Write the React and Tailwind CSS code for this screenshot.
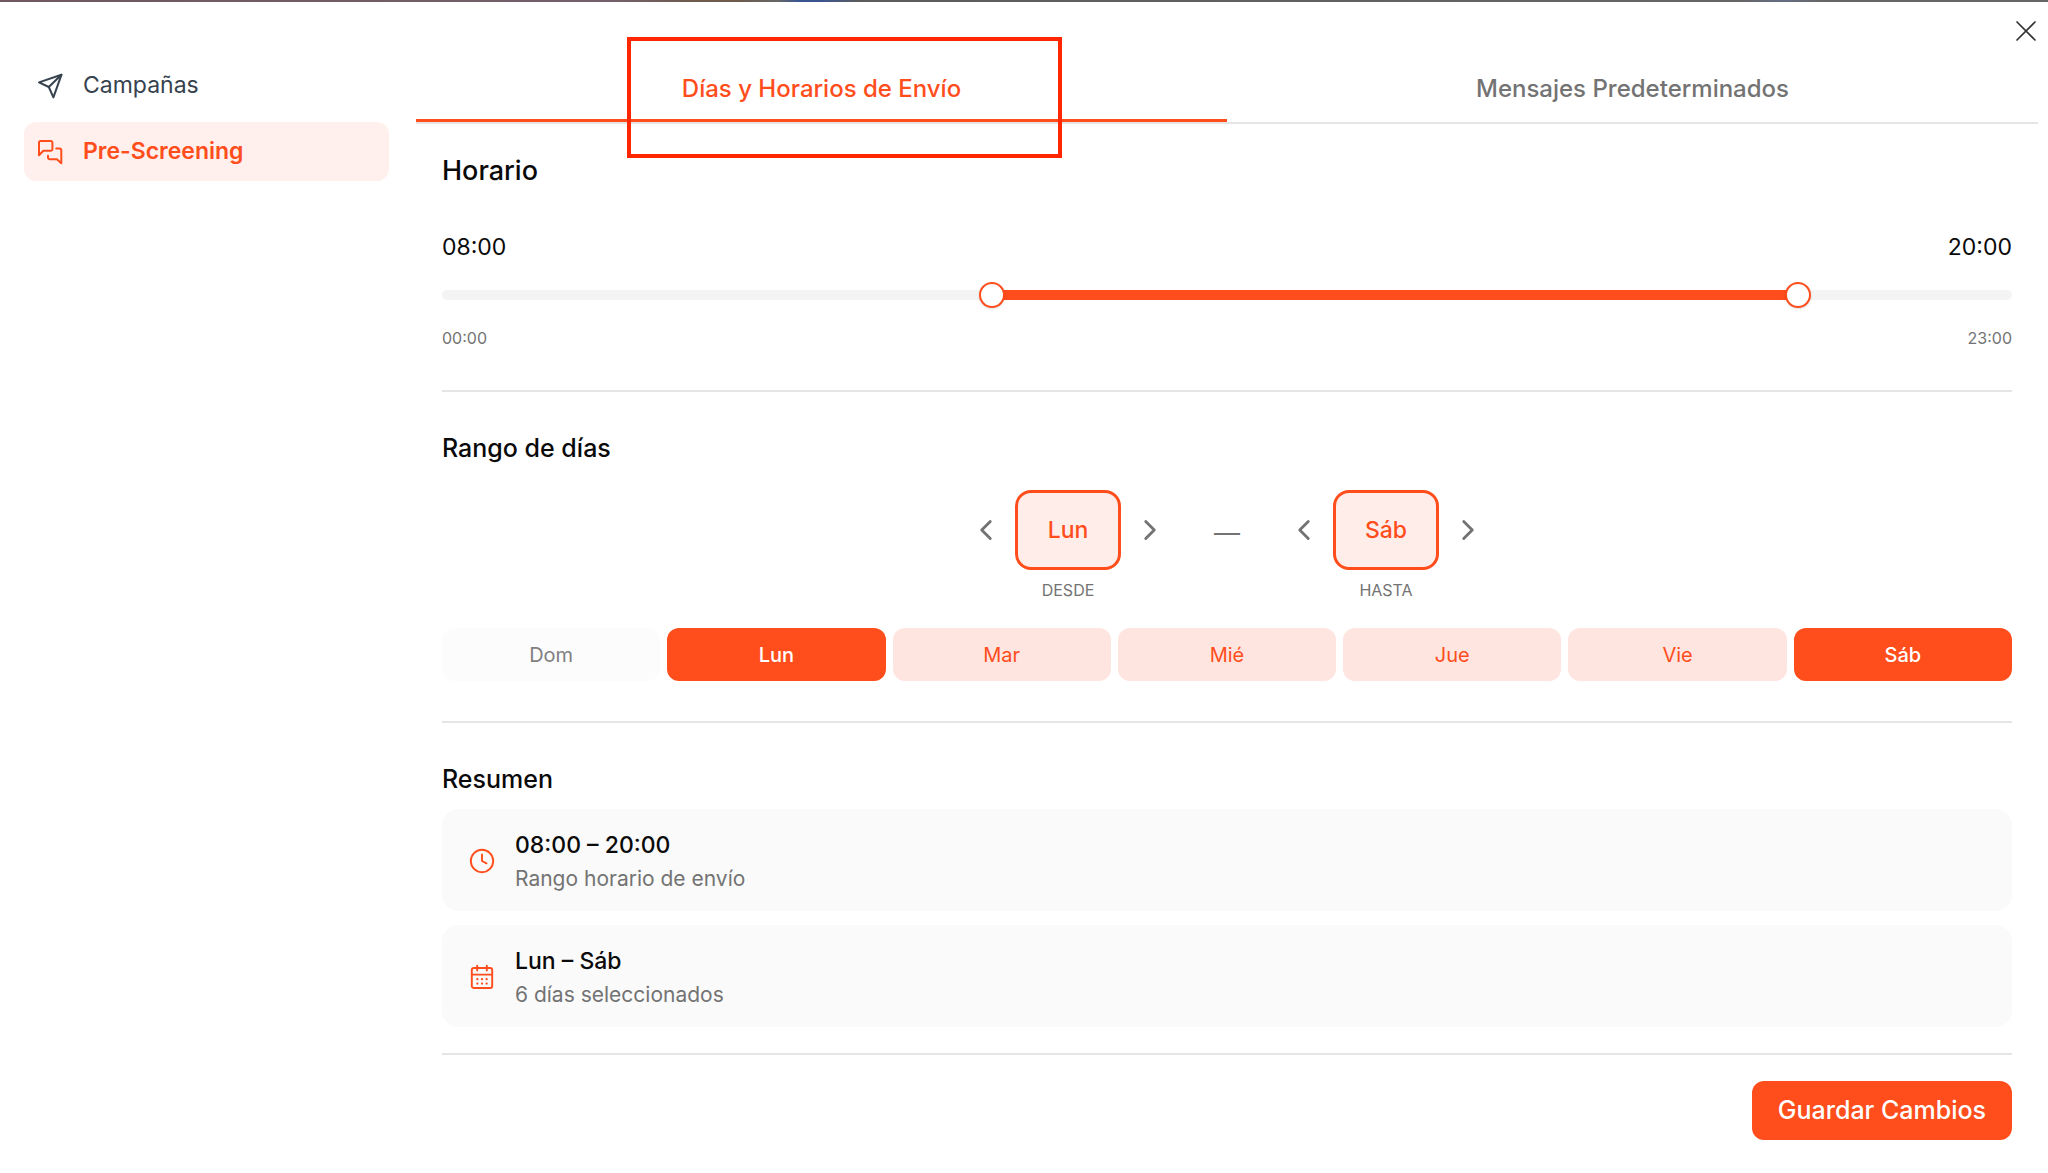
import React, { useState } from 'react';
import { ChevronLeft, ChevronRight } from 'lucide-react';

const DAYS = ['Dom', 'Lun', 'Mar', 'Mié', 'Jue', 'Vie', 'Sáb'];
const MAX_HOUR = 23;

const formatHour = (hour) => `${String(hour).padStart(2, '0')}:00`;

const SendIcon = () => (
  <svg className="size-[26px] shrink-0" viewBox="-1 -1 26 26" fill="none" stroke="currentColor" strokeWidth="2" strokeLinecap="round" strokeLinejoin="round">
    <path d="M23.4 0.8 L1 8.4 L10.8 13 L15.4 23.4 Z" />
    <path d="M23.4 0.8 L10.8 13" />
  </svg>
);

const ChatIcon = () => (
  <svg className="size-[26px] shrink-0" viewBox="-1 -1 26 26" fill="none" stroke="currentColor" strokeWidth="2" strokeLinecap="round" strokeLinejoin="round">
    <path d="M1 15.3 V2.6 A1.6 1.6 0 0 1 2.6 1 H12.8 A1.6 1.6 0 0 1 14.4 2.6 V9.2 A1.6 1.6 0 0 1 12.8 10.8 H5.4 Z" />
    <path d="M18.2 8.6 H21.7 A1.6 1.6 0 0 1 23.3 10.2 V23.3 L18.9 19.2 H11.8 A1.8 1.8 0 0 1 10 17.4 V15.8" />
  </svg>
);

const ClockIcon = () => (
  <svg className="size-[26px] shrink-0" viewBox="-1 -1 26 26" fill="none" stroke="currentColor" strokeWidth="1.9" strokeLinecap="round" strokeLinejoin="round">
    <circle cx="12" cy="12" r="11.2" />
    <path d="M12 5.5 V12 L16.5 14.3" />
  </svg>
);

const CalendarIcon = () => (
  <svg className="size-[26px] shrink-0" viewBox="-1 -1 26 26" fill="none" stroke="currentColor" strokeWidth="1.9" strokeLinecap="round" strokeLinejoin="round">
    <rect x="1.8" y="3" width="20.4" height="20" rx="2" />
    <path d="M1.8 9.6 H22.2 M7.2 0.8 V5.5 M16.8 0.8 V5.5" />
    <path d="M7.3 14.2 h.1 M12 14.2 h.1 M16.6 14.2 h.1 M7.3 18.6 h.1 M12 18.6 h.1 M16.6 18.6 h.1" strokeWidth="2.2" />
  </svg>
);

const CloseIcon = () => (
  <svg className="size-5" viewBox="0 0 20 20" fill="none" stroke="currentColor" strokeWidth="1.7" strokeLinecap="round">
    <path d="M1 1 L19 19 M19 1 L1 19" />
  </svg>
);

const rangeInput =
  'pointer-events-none absolute inset-0 h-full w-full appearance-none bg-transparent [&::-webkit-slider-thumb]:pointer-events-auto [&::-webkit-slider-thumb]:size-[26px] [&::-webkit-slider-thumb]:appearance-none [&::-webkit-slider-thumb]:rounded-full [&::-webkit-slider-thumb]:border-2 [&::-webkit-slider-thumb]:border-[#ff4d1c] [&::-webkit-slider-thumb]:bg-white [&::-webkit-slider-thumb]:shadow-sm';

const Sidebar = () => (
  <nav className="flex w-[365px] shrink-0 flex-col gap-[7px] pt-[54px] text-[23px]">
    <a href="#campanas" className="flex h-[59px] items-center gap-5 rounded-xl px-[13px] text-[#36424e]">
      <SendIcon />
      Campañas
    </a>
    <a href="#pre-screening" className="flex h-[59px] items-center gap-5 rounded-xl bg-[#fff0ed] px-[13px] font-semibold text-[#ff4d1c]">
      <ChatIcon />
      Pre-Screening
    </a>
  </nav>
);

const DayPicker = ({ label, day, onChange }) => (
  <div className="flex flex-col items-center gap-2">
    <div className="flex items-center gap-3">
      <button type="button" aria-label={`${label} anterior`} onClick={() => onChange((day + 6) % 7)} className="text-[#737373]">
        <ChevronLeft className="size-[34px]" />
      </button>
      <span className="flex h-20 w-[106px] items-center justify-center rounded-2xl border-3 border-[#ff4d1c] bg-[#ffede9] text-[23px] font-medium text-[#ff4d1c]">
        {DAYS[day]}
      </span>
      <button type="button" aria-label={`${label} siguiente`} onClick={() => onChange((day + 1) % 7)} className="text-[#737373]">
        <ChevronRight className="size-[34px]" />
      </button>
    </div>
    <span className="text-base text-[#737373] uppercase">{label}</span>
  </div>
);

const SummaryCard = ({ icon, title, text }) => (
  <div className="flex items-center gap-5 rounded-2xl bg-[#fafafa] px-[27px] pt-[18px] pb-4 text-[#ff4d1c]">
    {icon}
    <div>
      <p className="text-[23px] leading-9 font-medium text-[#0a0a0a]">{title}</p>
      <p className="text-[21px] leading-8 text-[#737373]">{text}</p>
    </div>
  </div>
);

const App = () => {
  const [start, setStart] = useState(8);
  const [end, setEnd] = useState(20);
  const [from, setFrom] = useState(1);
  const [to, setTo] = useState(6);

  const dayStyle = (index) => {
    if (index === from || index === to) return 'bg-[#ff4d1c] text-white font-medium';
    if (index > from && index < to) return 'bg-[#ffe5df] text-[#ff4d1c]';
    return 'bg-[#fcfcfc] text-[#808080]';
  };

  return (
    <div className="min-h-screen bg-white font-['Inter',sans-serif] text-[#0a0a0a]">
      {/* Sliver of the page behind the dialog */}
      <div className="h-0.5 bg-[linear-gradient(to_right,#6f5860_0%,#73606a_30%,#6e5b4c_34%,#6e5b4c_36%,#666666_38%,#3a5592_39%,#3a5592_40%,#5c5c5c_42%,#666666_85%,#666e85_87%,#666666_89%)]" />

      <div className="relative flex pr-2.5 pl-6">
        <button type="button" aria-label="Cerrar" className="absolute top-[19px] right-3 text-[#333333]">
          <CloseIcon />
        </button>

        <Sidebar />

        <main className="ml-[27px] min-w-0 flex-1 pt-12">
          {/* Tabs */}
          <div role="tablist" className="flex border-b-2 border-[#e5e5e5] text-2xl font-medium">
            <button type="button" role="tab" aria-selected="true" className="relative h-[72px] flex-1 border-b-3 border-[#ff4d1c] pt-2 text-[#ff4d1c]">
              Días y Horarios de Envío
              <span className="pointer-events-none absolute -top-[13px] left-[211px] h-[121px] w-[435px] border-4 border-[#ff2600]" />
            </button>
            <button type="button" role="tab" aria-selected="false" className="h-[72px] flex-1 border-b-3 border-transparent pt-2 text-[#737373]">
              Mensajes Predeterminados
            </button>
          </div>

          <div className="px-[26px]">
            {/* Horario */}
            <section className="border-b-2 border-[#e5e5e5] pt-[29px] pb-10">
              <h2 className="text-[27px] leading-9 font-medium">Horario</h2>
              <div className="mt-10 flex justify-between text-[23px] leading-9">
                <span>{formatHour(start)}</span>
                <span>{formatHour(end)}</span>
              </div>
              <div className="relative mt-[17px] mb-[18px] flex h-[26px] items-center">
                <div className="relative h-2.5 w-full overflow-hidden rounded-full bg-[#f4f4f4]">
                  <div
                    className="absolute inset-y-0 bg-[#ff4d1c]"
                    style={{ left: `${(start / MAX_HOUR) * 100}%`, right: `${100 - (end / MAX_HOUR) * 100}%` }}
                  />
                </div>
                <input type="range" aria-label="Hora de inicio" min="0" max={MAX_HOUR} value={start} onChange={(e) => setStart(Math.min(Number(e.target.value), end))} className={rangeInput} />
                <input type="range" aria-label="Hora de fin" min="0" max={MAX_HOUR} value={end} onChange={(e) => setEnd(Math.max(Number(e.target.value), start))} className={rangeInput} />
              </div>
              <div className="flex justify-between text-base text-[#737373]">
                <span>00:00</span>
                <span>23:00</span>
              </div>
            </section>

            {/* Rango de días */}
            <section className="border-b-2 border-[#e5e5e5] pt-[38px] pb-10">
              <h3 className="text-[25px] leading-9 font-medium">Rango de días</h3>
              <div className="mt-6 flex items-start justify-center gap-[47px]">
                <DayPicker label="Desde" day={from} onChange={setFrom} />
                <span className="flex h-20 items-center pt-1 text-[26px] text-[#737373]">—</span>
                <DayPicker label="Hasta" day={to} onChange={setTo} />
              </div>
              <div className="mt-[26px] grid grid-cols-7 gap-[7px]">
                {DAYS.map((day, index) => (
                  <button key={day} type="button" className={`h-[53px] rounded-xl text-xl ${dayStyle(index)}`}>
                    {day}
                  </button>
                ))}
              </div>
            </section>

            {/* Resumen */}
            <section className="border-b-2 border-[#e5e5e5] pt-[38px] pb-[26px]">
              <h3 className="text-[25px] leading-9 font-medium">Resumen</h3>
              <div className="mt-3 flex flex-col gap-[14px]">
                <SummaryCard icon={<ClockIcon />} title={`${formatHour(start)} – ${formatHour(end)}`} text="Rango horario de envío" />
                <SummaryCard icon={<CalendarIcon />} title={`${DAYS[from]} – ${DAYS[to]}`} text={`${to - from + 1} días seleccionados`} />
              </div>
            </section>

            <div className="flex justify-end py-[26px]">
              <button type="button" className="h-[59px] rounded-xl bg-[#ff4d1c] px-[26px] text-[25px] font-medium text-white">
                Guardar Cambios
              </button>
            </div>
          </div>
        </main>
      </div>
    </div>
  );
};

export default App;
